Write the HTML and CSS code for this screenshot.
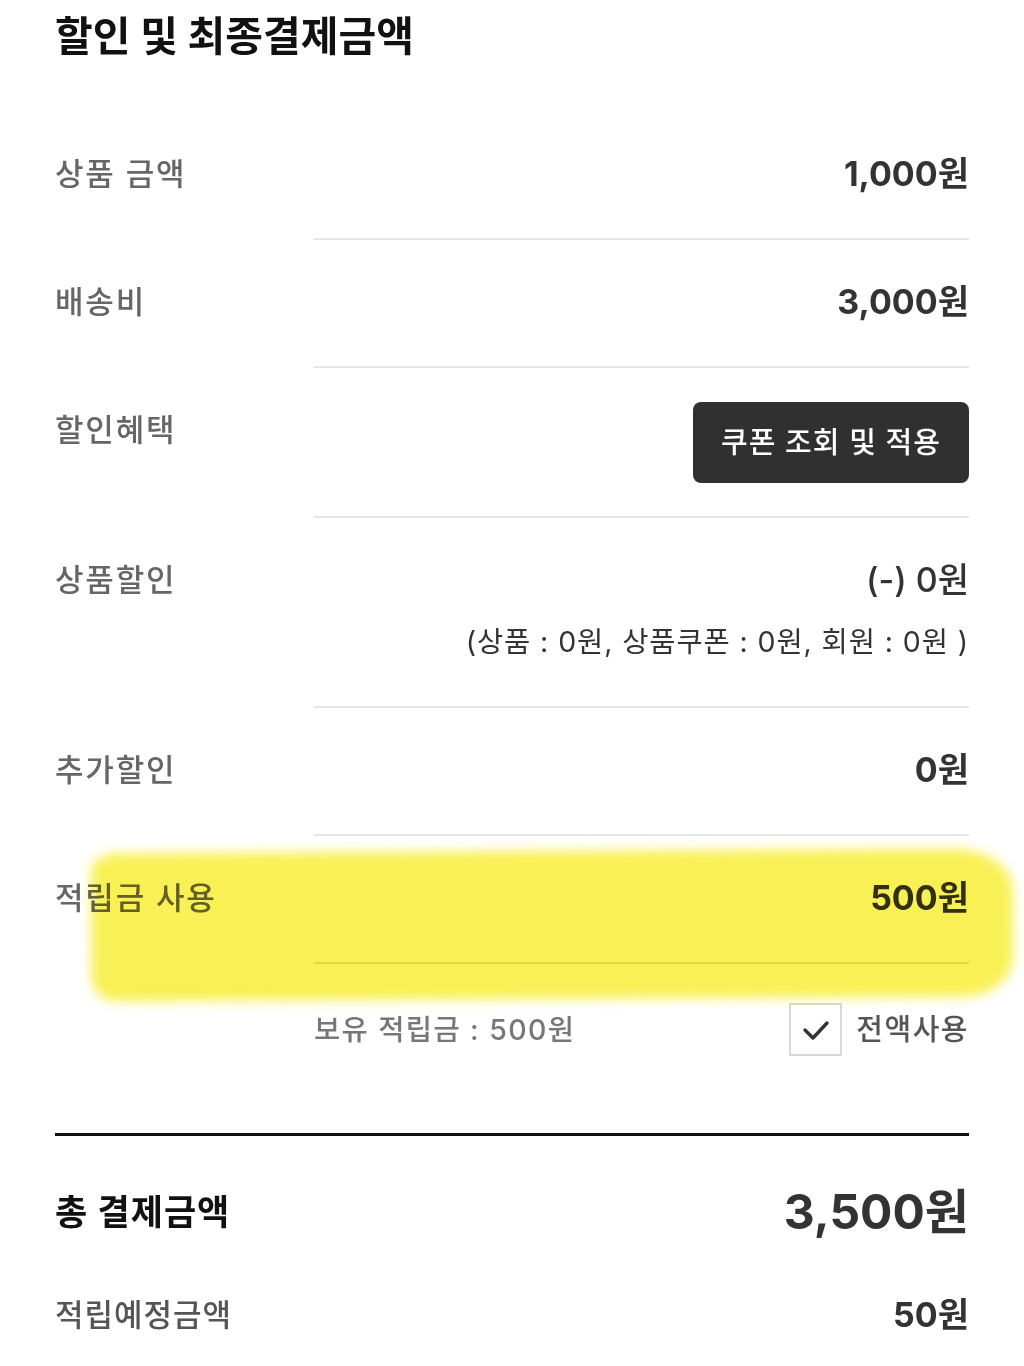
FILE: index.html
```html
<!DOCTYPE html>
<html lang="ko">
<head>
<meta charset="utf-8">
<title>할인 및 최종결제금액</title>
<link rel="stylesheet" href="styles.css">
</head>
<body>
<div class="page">
  <h2 class="title">할인 및 최종결제금액</h2>

  <div class="rows">
    <div class="row">
      <div class="label">상품 금액</div>
      <div class="cell"><span class="value">1,000원</span></div>
    </div>
    <div class="row">
      <div class="label">배송비</div>
      <div class="cell"><span class="value">3,000원</span></div>
    </div>
    <div class="row">
      <div class="label">할인혜택</div>
      <div class="cell cell-btn"><button class="coupon-btn" type="button">쿠폰 조회 및 적용</button></div>
    </div>
    <div class="row">
      <div class="label">상품할인</div>
      <div class="cell cell-stack">
        <span class="value value-normal">(-) 0원</span>
        <span class="sub">(상품 : 0원, 상품쿠폰 : 0원, 회원 : 0원 )</span>
      </div>
    </div>
    <div class="row">
      <div class="label">추가할인</div>
      <div class="cell"><span class="value">0원</span></div>
    </div>
    <div class="row">
      <div class="label">적립금 사용</div>
      <div class="cell"><span class="value">500원</span></div>
    </div>
    <div class="highlight"></div>
  </div>

  <div class="points">
    <span class="points-text">보유 적립금 : 500원</span>
    <label class="check">
      <span class="box">
        <svg width="28" height="22" viewBox="0 0 28 22"><polyline points="3,11 11,19 25,4" fill="none" stroke="#333" stroke-width="3.4" stroke-linecap="round" stroke-linejoin="round"/></svg>
      </span>
      <span class="check-text">전액사용</span>
    </label>
  </div>

  <div class="total">
    <div class="total-row">
      <span class="total-label">총 결제금액</span>
      <span class="total-value">3,500원</span>
    </div>
    <div class="earn-row">
      <span class="earn-label">적립예정금액</span>
      <span class="earn-value">50원</span>
    </div>
  </div>
</div>
</body>
</html>
```

FILE: styles.css
```css
* { box-sizing: border-box; }
html, body { margin: 0; padding: 0; background: #fff; }
body {
  font-family: Inter, "Noto Sans CJK KR", "Noto Sans", sans-serif;
  color: #333;
  width: 1024px;
  height: 1366px;
  overflow: hidden;
}
.page {
  padding: 0 55px;
}
.title {
  margin: 0;
  padding-top: 13px;
  font-size: 41px;
  line-height: 46px;
  font-weight: 700;
  color: #111;
  letter-spacing: 0;
}
.rows {
  position: relative;
  margin-top: 53px;
}
.row {
  display: grid;
  grid-template-columns: 259px 1fr;
}
.label {
  padding-top: 42px;
  font-size: 31px;
  line-height: 40px;
  font-weight: 500;
  letter-spacing: 1.8px;
  color: #666;
}
.cell {
  border-bottom: 2px solid #e6e6e6;
  padding: 42px 0 44px;
  display: flex;
  justify-content: flex-end;
  align-items: center;
  min-height: 128px;
}
.value {
  font-size: 34px;
  line-height: 40px;
  font-weight: 700;
  color: #333;
}
.value-normal { font-weight: 500; }
.cell-btn {
  padding: 34px 0 33px;
}
.coupon-btn {
  width: 276px;
  height: 81px;
  border: 0;
  border-radius: 8px;
  background: #303030;
  color: #fff;
  font-family: inherit;
  font-size: 29px;
  font-weight: 500;
  letter-spacing: 1px;
  line-height: 40px;
  padding: 0;
  cursor: pointer;
}
.cell-stack {
  flex-direction: column;
  align-items: flex-end;
  gap: 22px;
  padding-bottom: 44px;
}
.sub {
  font-size: 28.5px;
  line-height: 40px;
  letter-spacing: 0.9px;
  color: #333;
}
.highlight {
  position: absolute;
  left: 36px;
  right: -44px;
  bottom: -35px;
  height: 148px;
  background: #f8ef46;
  border-radius: 28px 60px 50px 24px / 18px 40px 40px 24px;
  filter: blur(6px);
  mix-blend-mode: multiply;
  opacity: 0.92;
  transform: rotate(-0.3deg);
}
.points {
  margin-left: 259px;
  display: flex;
  justify-content: space-between;
  align-items: center;
  padding-top: 39px;
}
.points-text {
  font-size: 28.5px;
  line-height: 40px;
  font-weight: 500;
  letter-spacing: 1.4px;
  color: #777;
}
.check {
  display: flex;
  align-items: center;
  gap: 14px;
}
.box {
  width: 53px;
  height: 53px;
  border: 2px solid #d9d9d9;
  display: flex;
  align-items: center;
  justify-content: center;
  background: #fff;
}
.check-text {
  font-size: 29px;
  line-height: 40px;
  font-weight: 500;
  letter-spacing: 1.5px;
  color: #555;
}
.total {
  margin-top: 77px;
  border-top: 3px solid #111;
}
.total-row {
  display: flex;
  justify-content: space-between;
  align-items: center;
  padding-top: 35px;
  height: 116px;
}
.total-label {
  font-size: 35px;
  line-height: 50px;
  font-weight: 700;
  letter-spacing: 1px;
  color: #111;
}
.total-value {
  font-size: 48px;
  line-height: 50px;
  font-weight: 700;
  color: #333;
}
.earn-row {
  display: flex;
  justify-content: space-between;
  align-items: center;
  padding-top: 43px;
}
.earn-label {
  font-size: 31px;
  line-height: 40px;
  font-weight: 500;
  letter-spacing: 1px;
  color: #555;
}
.earn-value {
  font-size: 34px;
  line-height: 40px;
  font-weight: 700;
  color: #333;
}
```
